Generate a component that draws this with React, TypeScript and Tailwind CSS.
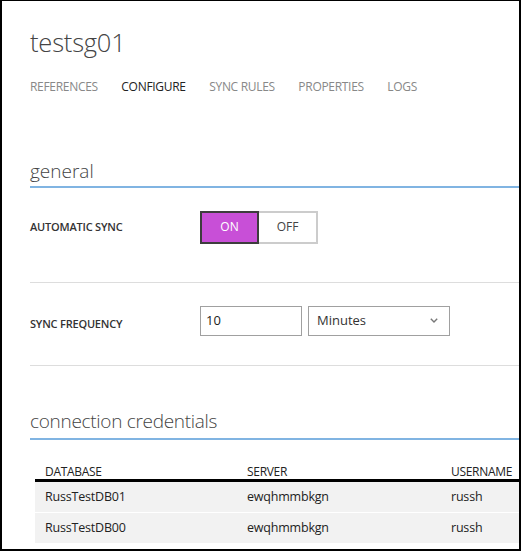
import React from "react";

function Chevron() {
  return (
    <svg width="8" height="5" viewBox="0 0 8 5" className="block">
      <path d="M0.8 0.8 L4 4 L7.2 0.8" fill="none" stroke="#777" strokeWidth="1.4" />
    </svg>
  );
}

export default function App() {
  const tabs = ["REFERENCES", "CONFIGURE", "SYNC RULES", "PROPERTIES", "LOGS"];
  const rows = [
    ["RussTestDB01", "ewqhmmbkgn", "russh"],
    ["RussTestDB00", "ewqhmmbkgn", "russh"],
  ];
  return (
    <div className="w-[521px] h-[551px] bg-white border-black border-l-2 border-t border-r-2 border-b-2 overflow-hidden font-['Open_Sans',sans-serif]">
      <div className="pl-[28px]">
        <h1 className="pt-[25px] text-[25.5px] leading-[33px] font-light text-[#444] tracking-[-0.2px]">
          testsg01
        </h1>
        <nav className="mt-[20px] flex gap-[23.5px] text-[12px] leading-[16px] tracking-[-0.3px]">
          {tabs.map((t) => (
            <span key={t} className={t === "CONFIGURE" ? "text-[#222]" : "text-[#888]"}>
              {t}
            </span>
          ))}
        </nav>

        <h2 className="mt-[64px] text-[19px] leading-[24px] font-light text-[#444] pb-[3px] border-b-2 border-[#80b4e2]">
          general
        </h2>

        <div className="flex items-center h-[95px] border-b border-[#dddddd]">
          <div className="w-[170px] text-[11px] font-semibold text-[#333] tracking-[-0.2px] -mt-[16px]">
            AUTOMATIC SYNC
          </div>
          <div className="flex -mt-[16px]">
            <div className="w-[59px] h-[33px] bg-[#c84fd7] border-2 border-[#3d3d3d] flex items-center justify-center text-white text-[12px]">
              ON
            </div>
            <div className="w-[59px] h-[33px] bg-white border-2 border-l-0 border-[#cccccc] flex items-center justify-center text-[#444] text-[12px]">
              OFF
            </div>
          </div>
        </div>

        <div className="flex items-center h-[83px] border-b border-[#dddddd]">
          <div className="w-[170px] text-[11px] font-semibold text-[#333] tracking-[-0.2px] mt-[1px]">
            SYNC FREQUENCY
          </div>
          <div className="flex gap-[6px] mt-[-7px]">
            <div className="w-[102px] h-[30px] border border-[#a0a0a0] flex items-center pl-[5px] text-[13px] text-[#222]">
              10
            </div>
            <div className="w-[142px] h-[30px] border border-[#a0a0a0] flex items-center justify-between pl-[8px] pr-[11px] text-[13px] text-[#333]">
              <span>Minutes</span>
              <Chevron />
            </div>
          </div>
        </div>

        <h2 className="mt-[43px] text-[19px] leading-[24px] font-light text-[#444] pb-[5px] border-b-2 border-[#80b4e2] tracking-[-0.3px]">
          connection credentials
        </h2>

        <div className="ml-[5px] mt-[25px] text-[12px] text-[#222]">
          <div className="grid grid-cols-[212px_204px_1fr] h-[17px] border-b-[3px] border-black leading-[14px] tracking-[-0.3px]">
            <div className="pl-[10px]">DATABASE</div>
            <div>SERVER</div>
            <div>USERNAME</div>
          </div>
          {rows.map((r, i) => (
            <div
              key={i}
              className={`grid grid-cols-[212px_204px_1fr] h-[30px] items-center bg-[#f2f2f2] text-[12.5px] tracking-[-0.2px] ${i > 0 ? "mt-[1px]" : ""}`}
            >
              <div className="pl-[10px]">{r[0]}</div>
              <div>{r[1]}</div>
              <div>{r[2]}</div>
            </div>
          ))}
        </div>
      </div>
    </div>
  );
}
